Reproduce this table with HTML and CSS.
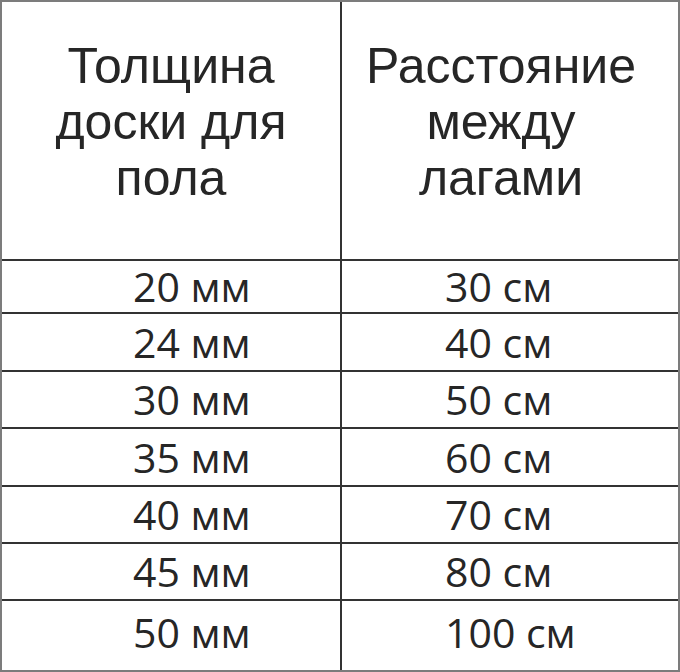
FILE: index.html
```html
<!DOCTYPE html>
<html lang="ru">
<head>
<meta charset="utf-8">
<link rel="stylesheet" href="styles.css">
</head>
<body>
<table class="tbl">
  <colgroup><col class="c1"><col class="c2"></colgroup>
  <thead>
    <tr class="head">
      <th class="h1">Толщина<br>доски для<br>пола</th>
      <th class="h2">Расстояние<br>между<br>лагами</th>
    </tr>
  </thead>
  <tbody>
    <tr class="r1"><td class="a">20 мм</td><td class="b">30 см</td></tr>
    <tr class="r2"><td class="a">24 мм</td><td class="b">40 см</td></tr>
    <tr class="r3"><td class="a">30 мм</td><td class="b">50 см</td></tr>
    <tr class="r4"><td class="a">35 мм</td><td class="b">60 см</td></tr>
    <tr class="r5"><td class="a">40 мм</td><td class="b">70 см</td></tr>
    <tr class="r6"><td class="a">45 мм</td><td class="b">80 см</td></tr>
    <tr class="r7"><td class="a">50 мм</td><td class="b">100 см</td></tr>
  </tbody>
</table>
</body>
</html>
```
FILE: styles.css
```css
html, body {
  margin: 0;
  padding: 0;
  background: #fff;
}
.tbl {
  width: 680px;
  height: 672px;
  table-layout: fixed;
  border-collapse: separate;
  border-spacing: 0;
  border: 2px solid #7c7c7c;
  color: #262626;
  box-sizing: border-box;
}
.c1 { width: 340px; }
.c2 { width: 336px; }
.tbl th, .tbl td {
  padding: 0;
  box-sizing: border-box;
}
.tbl th:first-child, .tbl td:first-child {
  border-right: 2px solid #333;
}
.tbl td {
  border-top: 2px solid #333;
}
.head { height: 257px; }
.head th {
  font-family: "Liberation Sans", Arial, sans-serif;
  font-weight: normal;
  font-size: 50px;
  line-height: 56px;
  vertical-align: top;
  text-align: center;
  padding-top: 36px;
}
.head .h2 { padding-right: 18px; }
.tbl td {
  font-family: "Open Sans", sans-serif;
  font-size: 41px;
  line-height: 41px;
  text-align: left;
  vertical-align: middle;
}
.tbl td.a { padding-left: 131px; }
.tbl td.b { padding-left: 103px; }
.r1 { height: 53px; }
.r2 { height: 58px; }
.r3 { height: 57px; }
.r4 { height: 58px; }
.r5 { height: 57px; }
.r6 { height: 57px; }
.r7 { height: 71px; }
.r7 td { padding-bottom: 6px; }
```
